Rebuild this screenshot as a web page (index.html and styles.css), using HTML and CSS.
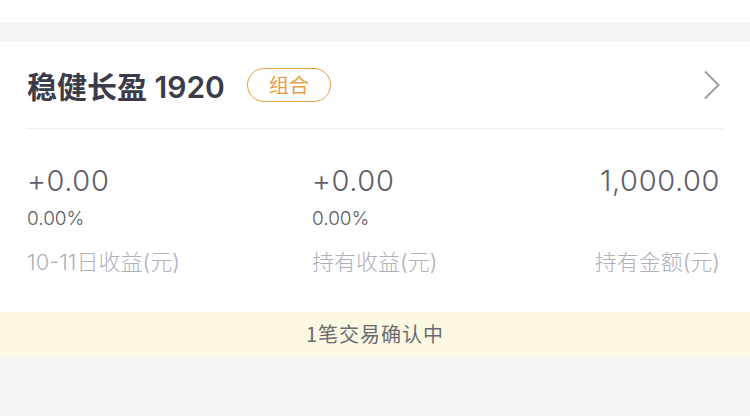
FILE: index.html
```html
<!DOCTYPE html>
<html lang="zh-CN">
<head>
    <meta charset="UTF-8">
    <meta name="viewport" content="width=device-width, initial-scale=1.0">
    <title>稳健长盈 1920</title>
    <link rel="stylesheet" href="styles.css">
</head>
<body>
    <div class="top-space"></div>
    <div class="gap"></div>

    <div class="card">
        <div class="card-head">
            <span class="title">稳健长盈 1920</span>
            <span class="tag">组合</span>
            <svg class="arrow" width="18" height="30" viewBox="0 0 18 30">
                <path d="M2 1.5 L15.5 15 L2 28.5" fill="none" stroke="#9a9aa2" stroke-width="2"/>
            </svg>
        </div>

        <div class="stats">
            <div class="stat">
                <p class="value">+0.00</p>
                <p class="rate">0.00%</p>
                <p class="label">10-11日收益(元)</p>
            </div>
            <div class="stat">
                <p class="value">+0.00</p>
                <p class="rate">0.00%</p>
                <p class="label">持有收益(元)</p>
            </div>
            <div class="stat right">
                <p class="value">1,000.00</p>
                <p class="rate">&nbsp;</p>
                <p class="label">持有金额(元)</p>
            </div>
        </div>
    </div>

    <div class="notice">1笔交易确认中</div>
</body>
</html>
```

FILE: styles.css
```css
body {
    margin: 0;
    background-color: #f5f5f5;
    font-family: "Noto Sans CJK SC", "Noto Sans", sans-serif;
}
.top-space {
    height: 22px;
    background-color: #fff;
}
.gap {
    height: 20px;
}
.card {
    background-color: #fff;
    padding: 0 27px;
}
.card-head {
    display: flex;
    align-items: center;
    height: 86px;
    border-bottom: 1px solid #eeeeee;
}
.title {
    font-family: Inter, "Noto Sans CJK SC", sans-serif;
    font-size: 30px;
    font-weight: 600;
    color: #3b3b49;
}
.tag {
    margin-left: 22px;
    padding: 0 21px;
    height: 32px;
    line-height: 32px;
    border: 1px solid #e99c40;
    border-radius: 17px;
    color: #e99c40;
    font-size: 20px;
}
.arrow {
    margin-left: auto;
    margin-right: 2px;
}
.stats {
    display: grid;
    grid-template-columns: 285px 1fr auto;
    padding: 34px 3px 35px 0;
    font-family: Inter, "Noto Sans CJK SC", sans-serif;
}
.stat p {
    margin: 0;
}
.stat.right {
    text-align: right;
}
.value {
    font-size: 29px;
    font-weight: 300;
    line-height: 36px;
    letter-spacing: 0.6px;
    color: #5f5e6b;
}
.rate {
    margin-top: 9px !important;
    font-size: 19px;
    font-weight: 300;
    line-height: 22px;
    color: #5c5c66;
}
.label {
    margin-top: 17px !important;
    font-size: 22px;
    font-weight: 300;
    line-height: 30px;
    color: #b0afbe;
}
.notice {
    height: 44px;
    line-height: 44px;
    background-color: #fdf8e2;
    text-align: center;
    font-size: 20px;
    letter-spacing: 1px;
    color: #6a6a72;
}
```
